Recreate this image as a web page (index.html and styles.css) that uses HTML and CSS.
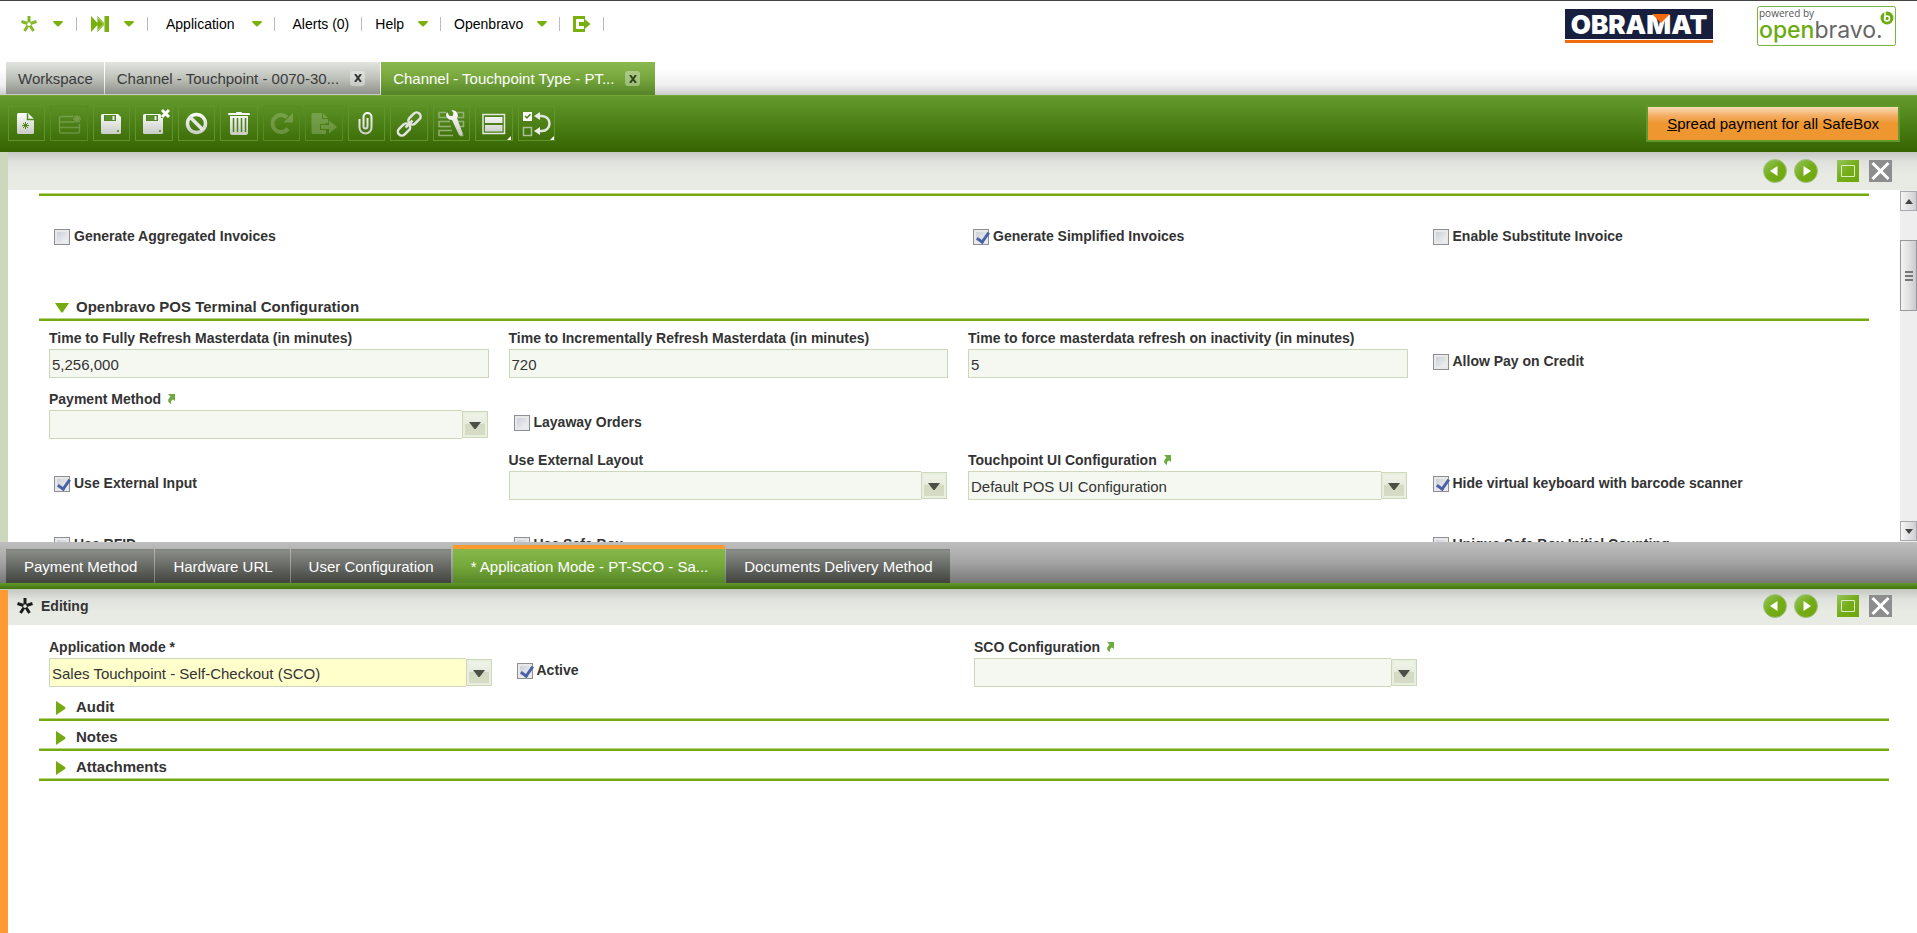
FILE: index.html
```html
<!DOCTYPE html>
<html lang="en">
<head>
    <meta charset="UTF-8">
    <meta name="viewport" content="width=device-width, initial-scale=1.0">
    <title>Openbravo</title>
    <link rel="stylesheet" href="styles.css">
</head>
<body>
    <!-- Shared icons -->
    <svg class="defs" width="0" height="0" aria-hidden="true">
        <defs>
            <linearGradient id="silver" gradientUnits="userSpaceOnUse" x1="0" y1="6" x2="0" y2="30">
                <stop offset="0" stop-color="#fff"/>
                <stop offset="1" stop-color="#c4c8c0"/>
            </linearGradient>
            <linearGradient id="green" x1="0" y1="0" x2="1" y2="1">
                <stop offset="0" stop-color="#95c55c"/>
                <stop offset=".5" stop-color="#74ad18"/>
                <stop offset="1" stop-color="#6ea60c"/>
            </linearGradient>
        </defs>
        <symbol id="star" viewBox="0 0 18 18">
            <path d="M9 7.500V1M10.500 8.500l6-2M10 10.500l3.500 5.500M8 10.500L4.500 16M7.500 8.500l-6-2" fill="none" stroke="currentColor" stroke-width="3"/>
        </symbol>
        <symbol id="caret" viewBox="0 0 10 6"><path d="M0 1q0-1 1-1h8q1 0 1 1L6 5q-1 1-2 0z" fill="#78b00e"/></symbol>
        <symbol id="down" viewBox="0 0 12 8"><path d="M0 0h12L7 6.500q-1 1-2 0z" fill="#4c4f45"/></symbol>
        <symbol id="jump" viewBox="0 0 8 10"><path d="M1 0h7v7L6 5.500Q3.500 6 4 10 0 8 1.500 5L3.500 2.500z" fill="#6cab3c"/></symbol>
        <symbol id="prev" viewBox="0 0 24 24">
            <circle cx="12" cy="12" r="11.500" fill="url(#green)" stroke="#a5c187"/>
            <path d="M14.500 7v10L7 12z" fill="#fff"/>
        </symbol>
        <symbol id="next" viewBox="0 0 24 24">
            <circle cx="12" cy="12" r="11.500" fill="url(#green)" stroke="#a5c187"/>
            <path d="M9.500 7v10l7.500-5z" fill="#fff"/>
        </symbol>
        <symbol id="maximize" viewBox="0 0 22 22">
            <path d="M0 0h22v22H0z" fill="url(#green)"/>
            <path d="M4.500 5.500h13v11h-13z" fill="none" stroke="#dcebc4"/>
        </symbol>
        <symbol id="close" viewBox="0 0 23 22">
            <path d="M0 0h23v22H0z" fill="#8d8d8d"/>
            <path d="M3.500 3l16 16M19.500 3l-16 16" stroke="#fff" stroke-width="3" fill="none"/>
        </symbol>
        <symbol id="floppy" viewBox="0 0 38 36">
            <path d="M9.500 8H25l3 3v15.500q0 1.500-1.500 1.500h-17Q8 28 8 26.500v-17Q8 8 9.500 8z" fill="url(#silver)"/>
            <path d="M11 9h12v6H11z" fill="#4f861f"/>
            <path d="M12.500 9H18v4.500h-5.500zM19.500 10h2v4h-2z" fill="#f4f6f2"/>
            <path d="M12 9h6.500v5H12z" fill="#5c8f2e"/>
            <path d="M24 24h2v2h-2z" fill="#6f9a48"/>
        </symbol>
    </svg>

    <header class="top">
        <nav class="nav">
            <button class="menu" aria-label="Quick create"><svg class="star" width="18" height="18"><use href="#star"/></svg><svg width="10" height="6"><use href="#caret"/></svg></button>
            <span class="sep"></span>
            <button class="menu" aria-label="Quick launch"><svg width="18" height="16"><path d="M0 0l7.500 8L0 16zM6.500 0L14 8l-7.500 8zM13.500 0H18v16h-4.500z" fill="#78b00e"/><path d="M7 2l5.500 6L7 14M13.500 2v12" fill="none" stroke="#b4d47a"/></svg><svg width="10" height="6"><use href="#caret"/></svg></button>
            <span class="sep"></span>
            <button class="menu menu-wide">Application <svg width="10" height="6"><use href="#caret"/></svg></button>
            <span class="sep"></span>
            <button class="menu menu-wide">Alerts (0)</button>
            <span class="sep"></span>
            <button class="menu menu-text">Help <svg width="10" height="6"><use href="#caret"/></svg></button>
            <span class="sep"></span>
            <button class="menu menu-text">Openbravo <svg width="10" height="6"><use href="#caret"/></svg></button>
            <span class="sep"></span>
            <button class="menu menu-text" aria-label="Log out"><svg width="18" height="16"><path d="M12 0v3H3v10h9v3H0V0z" fill="#78b00e"/><path d="M6 6h5V2.500L17.500 8 11 13.500V10H6z" fill="#78b00e"/></svg></button>
            <span class="sep"></span>
        </nav>
        <div class="logos">
            <svg width="148" height="34" role="img" aria-label="Obramat">
                <path d="M0 0h148v30H0z" fill="#171f3d"/>
                <path d="M0 31h148v3H0z" fill="#f26a0b"/>
                <text class="logo-obramat" x="74" y="25" text-anchor="middle">OBRAMAT</text>
                <path d="M87 5h18l-9 9z" fill="#f26a0b"/>
            </svg>
            <svg width="139" height="40" role="img" aria-label="powered by openbravo">
                <rect x=".5" y=".5" width="138" height="39" rx="2" fill="#fff" stroke="#78b43c"/>
                <text class="logo-powered" x="2" y="11">powered by</text>
                <text class="logo-openbravo" x="2" y="32"><tspan class="logo-open">open</tspan><tspan class="logo-light">bravo.</tspan></text>
                <circle cx="130" cy="12" r="6.500" fill="#6aab10"/>
                <path d="M128 5v8" stroke="#fff" stroke-width="1.500"/>
                <circle cx="130" cy="12.500" r="2.500" fill="none" stroke="#fff" stroke-width="1.500"/>
            </svg>
        </div>
    </header>

    <div class="tabs">
        <button class="tab">Workspace</button>
        <button class="tab">Channel - Touchpoint - 0070-30... <span class="tab-close"><svg width="8" height="8"><path d="M1 0l6 8M7 0L1 8" stroke="#333" stroke-width="2"/></svg></span></button>
        <button class="tab tab-active">Channel - Touchpoint Type - PT... <span class="tab-close"><svg width="8" height="8"><path d="M1 0l6 8M7 0L1 8" stroke="#2e4519" stroke-width="2"/></svg></span></button>
    </div>

    <div class="toolbar">
        <div class="tools">
            <button class="tool" aria-label="New"><svg viewBox="0 0 38 36"><path d="M10.500 7H20l6 6v13.500q0 1.500-1.500 1.500h-14Q9 28 9 26.500v-18Q9 7 10.500 7z" fill="url(#silver)"/><path d="M19.500 7.500v6H26" fill="none" stroke="#4f861f" stroke-width="1.500"/><path d="M17.500 16v7M14 19.500h7M15 17l5 5M20 17l-5 5" stroke="#4f861f"/></svg></button>
            <button class="tool tool-off" aria-label="New in grid" disabled><svg viewBox="0 0 38 36"><g fill="none" stroke="#fff" stroke-width="1.500"><path d="M23 10.500H11Q9.500 10.500 9.500 12v13.500q0 1.500 1.500 1.500h17q1.500 0 1.500-1.500V18M9.500 16H24M9.500 21.500h20"/><path d="M27 9v8M23 13h8M24 10l6 6M30 10l-6 6"/></g></svg></button>
            <button class="tool" aria-label="Save"><svg viewBox="0 0 38 36"><use href="#floppy" width="38" height="36"/></svg></button>
            <button class="tool" aria-label="Save and close"><svg viewBox="0 0 38 36"><use href="#floppy" width="38" height="36"/><path d="M26 3h9v9h-9z" fill="#548c22"/><path d="M27 4l7 7M34 4l-7 7" stroke="#fff" stroke-width="3"/></svg></button>
            <button class="tool" aria-label="Cancel"><svg viewBox="0 0 38 36"><circle cx="18.500" cy="17.500" r="9" fill="none" stroke="url(#silver)" stroke-width="3.500"/><path d="M12 11l13 13" stroke="#e6e8e3" stroke-width="3.500"/></svg></button>
            <button class="tool" aria-label="Delete"><svg viewBox="0 0 38 36"><path d="M16 7q0-1 1-1h4q1 0 1 1h7q1 0 1 2H8q0-2 1-2zM10 10h18v17q0 2-2 2H12q-2 0-2-2z" fill="url(#silver)"/><path d="M13.500 12v14M17.500 12v14M21.500 12v14M25.500 12v14" stroke="#4b8019" stroke-width="1.500"/></svg></button>
            <button class="tool tool-off" aria-label="Refresh" disabled><svg viewBox="0 0 38 36"><path d="M25 22.500A8.500 8.500 0 1 1 24 11.500" fill="none" stroke="#fff" stroke-width="4"/><path d="M30 7v9.500h-9.500z" fill="#fff"/></svg></button>
            <button class="tool tool-off" aria-label="Export" disabled><svg viewBox="0 0 38 36"><path d="M8 7h9v6h6v4h-2l-1 1h-5v6h6v3q0 1-1 1H8q-1.500 0-1.500-1.500v-18Q6.500 7 8 7z" fill="#fff"/><path d="M18 7l5 5h-5zM16 19h8v-4.500l8 6.500-8 6.500V23h-8z" fill="#fff"/></svg></button>
            <button class="tool" aria-label="Attachments"><svg viewBox="0 0 38 36"><path d="M11.500 13v8.500a6 6 0 0 0 12 0V11a4 4 0 0 0-8 0v9.500a2 2 0 0 0 4 0V12" fill="none" stroke="url(#silver)" stroke-width="2"/></svg></button>
            <button class="tool" aria-label="Link"><svg viewBox="0 0 38 36"><g fill="none" stroke="#e3e6e0" stroke-width="2.500"><rect x="-7" y="-4" width="14" height="8" rx="4" transform="translate(24.500 12.500) rotate(-45)"/><rect x="-7" y="-4" width="14" height="8" rx="4" transform="translate(14 23.500) rotate(-45)"/><path d="M15.500 21.500l7-7"/></g></svg></button>
            <button class="tool" aria-label="Process"><svg viewBox="0 0 38 36"><g fill="none" stroke="#93b173" stroke-width="1.500"><path d="M13 6.500H6v5h8M24 6.500h6.500v5H24M17 15.500H6v5h12M23 15.500h7.500v5H25M19 24.500H6v5h14M27 29.500h3.500"/></g><path d="M14 6l2.500 4 3 0 1-3-2-3q6 0 6.500 6l-1 2 6 16q-2 3-4 1l-7-15q-5 0-6-5z" fill="url(#silver)"/></svg></button>
            <button class="tool" aria-label="Grid and form view"><svg viewBox="0 0 38 36"><path d="M8 8.500h21.500v19H8z" fill="#4b8019" stroke="#e3e6e0" stroke-width="1.500"/><path d="M10 11h17.500v6H10zM10 19h17.500v6.500H10z" fill="url(#silver)"/><path d="M36 30v4h-4z" fill="#fff"/></svg></button>
            <button class="tool" aria-label="Set view"><svg viewBox="0 0 38 36"><path d="M5 6h9v9H5z" fill="#fff"/><path d="M7 10l2 2 3.500-4" fill="none" stroke="#4b8019" stroke-width="1.500"/><path d="M5.500 21.500h8v8h-8z" fill="none" stroke="#a9c094" stroke-width="1.500"/><path d="M20 10h4a7.500 7.500 0 0 1 0 15h-4" fill="none" stroke="#e3e6e0" stroke-width="2.500"/><path d="M22 6v8l-6-4zM22 21v8l-6-4z" fill="#eceeea"/><path d="M36 30v4h-4z" fill="#fff"/></svg></button>
        </div>
        <button class="action"><u>S</u>pread payment for all SafeBox</button>
    </div>

    <main class="view">
        <section class="pane pane-header">
            <div class="status">
                <button class="icon" aria-label="Previous"><svg width="24" height="24"><use href="#prev"/></svg></button>
                <button class="icon" aria-label="Next"><svg width="24" height="24"><use href="#next"/></svg></button>
                <button class="icon icon-max" aria-label="Maximize"><svg width="22" height="22"><use href="#maximize"/></svg></button>
                <button class="icon icon-close" aria-label="Close"><svg width="23" height="22"><use href="#close"/></svg></button>
            </div>
            <div class="scroller">
                <div class="form">
                    <div class="rule"></div>
                    <div class="fields">
                        <label class="check"><input type="checkbox">Generate Aggregated Invoices</label>
                        <label class="check col-3"><input type="checkbox" checked>Generate Simplified Invoices</label>
                        <label class="check"><input type="checkbox">Enable Substitute Invoice</label>
                    </div>
                    <h2 class="section section-open"><button><svg width="14" height="10"><path d="M0 0h14L8 9q-1 1-2 0z" fill="#72aa10"/></svg>Openbravo POS Terminal Configuration</button></h2>
                    <div class="fields">
                        <div class="field">
                            <label for="full-refresh">Time to Fully Refresh Masterdata (in minutes)</label>
                            <input id="full-refresh" type="text" value="5,256,000">
                        </div>
                        <div class="field">
                            <label for="inc-refresh">Time to Incrementally Refresh Masterdata (in minutes)</label>
                            <input id="inc-refresh" type="text" value="720">
                        </div>
                        <div class="field">
                            <label for="force-refresh">Time to force masterdata refresh on inactivity (in minutes)</label>
                            <input id="force-refresh" type="text" value="5">
                        </div>
                        <label class="check"><input type="checkbox">Allow Pay on Credit</label>

                        <div class="field">
                            <label for="payment-method">Payment Method <svg width="8" height="10"><use href="#jump"/></svg></label>
                            <div class="combo">
                                <select id="payment-method"><option></option></select>
                                <span class="picker"><svg width="12" height="8"><use href="#down"/></svg></span>
                            </div>
                        </div>
                        <label class="check"><input type="checkbox">Layaway Orders</label>

                        <label class="check col-1"><input type="checkbox" checked>Use External Input</label>
                        <div class="field">
                            <label for="external-layout">Use External Layout</label>
                            <div class="combo">
                                <select id="external-layout"><option></option></select>
                                <span class="picker"><svg width="12" height="8"><use href="#down"/></svg></span>
                            </div>
                        </div>
                        <div class="field">
                            <label for="ui-config">Touchpoint UI Configuration <svg width="8" height="10"><use href="#jump"/></svg></label>
                            <div class="combo">
                                <select id="ui-config"><option>Default POS UI Configuration</option></select>
                                <span class="picker"><svg width="12" height="8"><use href="#down"/></svg></span>
                            </div>
                        </div>
                        <label class="check"><input type="checkbox" checked>Hide virtual keyboard with barcode scanner</label>

                        <label class="check"><input type="checkbox">Use RFID</label>
                        <label class="check"><input type="checkbox">Use Safe Box</label>
                        <label class="check col-4"><input type="checkbox">Unique Safe Box Initial Counting</label>
                    </div>
                </div>
                <div class="scrollbar">
                    <button class="scroll-btn" aria-label="Scroll up"><svg width="8" height="5"><path d="M4 0l4 5H0z" fill="#444"/></svg></button>
                    <div class="thumb"><i></i><i></i><i></i></div>
                    <button class="scroll-btn scroll-down" aria-label="Scroll down"><svg width="8" height="5"><path d="M0 0h8L4 5z" fill="#444"/></svg></button>
                </div>
            </div>
        </section>

        <div class="child-tabs">
            <button class="child-tab">Payment Method</button>
            <button class="child-tab">Hardware URL</button>
            <button class="child-tab">User Configuration</button>
            <button class="child-tab child-active">* Application Mode - PT-SCO - Sa...</button>
            <button class="child-tab">Documents Delivery Method</button>
        </div>
        <div class="strip"></div>

        <section class="pane pane-child">
            <div class="status">
                <svg class="editing-star" width="18" height="18"><use href="#star"/></svg>
                <span class="editing">Editing</span>
                <button class="icon" aria-label="Previous"><svg width="24" height="24"><use href="#prev"/></svg></button>
                <button class="icon" aria-label="Next"><svg width="24" height="24"><use href="#next"/></svg></button>
                <button class="icon icon-max" aria-label="Maximize"><svg width="22" height="22"><use href="#maximize"/></svg></button>
                <button class="icon icon-close" aria-label="Close"><svg width="23" height="22"><use href="#close"/></svg></button>
            </div>
            <div class="form form-child">
                <div class="fields">
                    <div class="field">
                        <label for="app-mode">Application Mode *</label>
                        <div class="combo required">
                            <select id="app-mode"><option>Sales Touchpoint - Self-Checkout (SCO)</option></select>
                            <span class="picker"><svg width="12" height="8"><use href="#down"/></svg></span>
                        </div>
                    </div>
                    <label class="check"><input type="checkbox" checked>Active</label>
                    <div class="field">
                        <label for="sco-config">SCO Configuration <svg width="8" height="10"><use href="#jump"/></svg></label>
                        <div class="combo">
                            <select id="sco-config"><option></option></select>
                            <span class="picker"><svg width="12" height="8"><use href="#down"/></svg></span>
                        </div>
                    </div>
                </div>
                <h2 class="section"><button><svg width="14" height="14"><path d="M1 0l9 6q1 1 0 2l-9 6z" fill="#72aa10"/></svg>Audit</button></h2>
                <h2 class="section"><button><svg width="14" height="14"><path d="M1 0l9 6q1 1 0 2l-9 6z" fill="#72aa10"/></svg>Notes</button></h2>
                <h2 class="section"><button><svg width="14" height="14"><path d="M1 0l9 6q1 1 0 2l-9 6z" fill="#72aa10"/></svg>Attachments</button></h2>
            </div>
        </section>
    </main>
</body>
</html>
```

FILE: styles.css
```css
* {
    box-sizing: border-box;
}

body {
    margin: 0;
    height: 100vh;
    display: flex;
    flex-direction: column;
    overflow: hidden;
    border-top: 1px solid #444;
    background-color: #fff;
    color: #333;
    font-family: "Liberation Sans", Arial, sans-serif;
    font-size: 15px;
}

button {
    margin: 0;
    padding: 0;
    border: 0;
    background: none;
    color: inherit;
    font: inherit;
    cursor: pointer;
}

svg {
    display: block;
    flex: none;
}

.defs {
    position: absolute;
}

/* Top bar */
.top {
    display: flex;
    justify-content: space-between;
    height: 61px;
    flex: none;
}

.nav {
    display: flex;
    align-items: center;
    height: 46px;
    padding-left: 6px;
    color: #000;
    font-size: 14px;
}

.menu {
    display: flex;
    align-items: center;
    gap: 15px;
    padding: 0 13px 0 14px;
    white-space: nowrap;
}

.menu-text {
    gap: 14px;
    padding: 0 12px 0 13px;
}

.menu-wide {
    gap: 17px;
    padding: 0 12px 0 18px;
}

.star {
    color: #83b928;
}

.sep {
    width: 1px;
    height: 14px;
    background-color: #bbb;
}

.logos {
    display: flex;
    align-items: center;
    gap: 44px;
    height: 50px;
    padding-right: 21px;
}

.logo-obramat {
    fill: #fff;
    font-family: Inter, sans-serif;
    font-size: 26px;
    font-weight: 900;
}

.logo-powered {
    fill: #555;
    font-family: "Open Sans", sans-serif;
    font-size: 10px;
}

.logo-openbravo {
    font-family: Inter, sans-serif;
    font-size: 23px;
    font-weight: 400;
}

.logo-open {
    fill: #6aab10;
    font-weight: 500;
}

.logo-light {
    fill: #666;
}

/* Main tabs */
.tabs {
    display: flex;
    flex: none;
    gap: 1px;
    height: 33px;
    padding-left: 6px;
    background-image: linear-gradient(#fff 20%, #f0f0f0 70%, #ccc);
}

.tab {
    display: flex;
    align-items: center;
    gap: 11px;
    padding: 0 11px 0 12px;
    border-bottom: 1px solid #c8c8cc;
    background-image: linear-gradient(#e2e4df, #bfc2bb 50%, #8f928b);
    color: #3a3a3a;
    white-space: nowrap;
}

.tab-active {
    border-bottom: 0;
    background-image: linear-gradient(#8bb950, #76a63b 50%, #55842a);
    color: #fff;
}

.tab-close {
    display: flex;
    align-items: center;
    justify-content: center;
    width: 15px;
    height: 15px;
    margin-right: 4px;
    border-radius: 3px;
    background-color: rgba(255, 255, 255, 0.35);
}

/* Toolbar */
.toolbar {
    display: flex;
    align-items: center;
    justify-content: space-between;
    flex: none;
    height: 57px;
    padding: 0 17px 2px 8px;
    border-top: 1px solid #74a832;
    background-image: linear-gradient(#649a2e, #4c8016 50%, #356300);
}

.tools {
    display: flex;
    gap: 5px;
    width: 547px;
}

.tool {
    flex: 1;
    min-width: 0;
    height: 35px;
    border: 1px solid #5f952b;
}

.tool svg {
    width: 38px;
    height: 36px;
    margin: -1px;
}

.tool-off {
    border-color: #558b22;
}

.tool-off svg {
    opacity: 0.2;
}

.action {
    height: 37px;
    padding: 0 19px;
    border: 2px solid #609a2c;
    background-image: linear-gradient(#fbdcb8, #f4b068 25%, #ee9630 50%, #ee9630);
    color: #000;
}

/* Panes */
.view {
    display: flex;
    flex: 1;
    flex-direction: column;
    min-height: 0;
}

.pane {
    display: flex;
    flex-direction: column;
    min-height: 0;
    border-left: 8px solid #cdd7bb;
}

.pane-header {
    flex: 390;
}

.pane-child {
    flex: 343;
    border-left-color: #ff9933;
}

.status {
    display: flex;
    align-items: center;
    justify-content: flex-end;
    gap: 7px;
    flex: none;
    height: 38px;
    padding: 0 25px 0 8px;
    background-image: linear-gradient(#c6c8c3, #dfe2dc 25%, #e8ebe4 60%);
}

.pane-child .status {
    height: 35px;
    padding-bottom: 3px;
}

.icon-max {
    margin-left: 12px;
}

.icon-close {
    margin-left: 3px;
}

.editing-star {
    color: #1c1c1c;
}

.editing {
    flex: 1;
    font-size: 14px;
    font-weight: bold;
}

.scroller {
    display: flex;
    flex: 1;
    min-height: 0;
    overflow: hidden;
}

/* Forms */
.form {
    flex: 1;
    padding: 3px 31px 0;
}

.form-child {
    padding: 11px 28px 0 31px;
}

.rule {
    height: 3px;
    margin-bottom: 6px;
    border-top: 1px solid #b9d487;
    background-color: #72aa10;
}

.fields {
    display: grid;
    grid-template-columns: repeat(4, 1fr);
    grid-auto-rows: 51px;
    gap: 10px 20px;
    padding: 0 2px 0 10px;
}

.form-child .fields {
    padding-right: 10px;
    margin-bottom: 4px;
}

.field label {
    display: flex;
    align-items: center;
    gap: 6px;
    height: 22px;
    font-size: 14px;
    font-weight: bold;
}

.field input,
.field select {
    display: block;
    width: 100%;
    height: 29px;
    padding: 2px 2px 0;
    border: 1px solid #cdd7bb;
    border-radius: 0;
    outline: 0;
    background-color: #f5f8f1;
    color: #333;
    font: inherit;
    appearance: none;
}

.combo {
    display: flex;
    align-items: center;
    padding-right: 1px;
}

.form-child .combo {
    padding-right: 0;
}

.combo select {
    flex: 1;
    min-width: 0;
    border-right: 0;
}

.required select {
    background-color: #ffffcc;
}

.picker {
    display: flex;
    align-items: center;
    justify-content: center;
    width: 26px;
    height: 27px;
    padding-top: 3px;
    border: 1px solid #cdd7bb;
    background-image: linear-gradient(#f2f5ec, #e8ecdd 45%, #d3d9c2 50%, #d6dcc6);
    box-shadow: inset 0 0 0 2px #e9efdf;
}

.check {
    display: flex;
    align-items: center;
    align-self: start;
    gap: 4px;
    height: 18px;
    margin-top: 26px;
    padding: 0 0 2px 5px;
    font-size: 14px;
    font-weight: bold;
    line-height: 16px;
}

.check input {
    position: relative;
    flex: none;
    width: 16px;
    height: 16px;
    margin: 2px 0 0;
    border: 1px solid #8c8f94;
    background-image: linear-gradient(135deg, #c5c9d2, #f8f8f8);
    box-shadow: inset 0 0 0 2px #e9e9e9;
    appearance: none;
}

.check input:checked::after {
    content: "";
    position: absolute;
    left: 5px;
    top: 0;
    width: 5px;
    height: 10px;
    border: solid #4a62a8;
    border-width: 0 3px 3px 0;
    transform: rotate(35deg);
}

.col-1 {
    grid-column: 1;
}

.col-3 {
    grid-column: 3;
}

.col-4 {
    grid-column: 4;
}

.section {
    height: 30px;
    margin: 0;
    border-bottom: 2px solid #72aa10;
    box-shadow: inset 0 -1px #b9d487;
    font-size: 15px;
}

.section button {
    display: flex;
    align-items: center;
    gap: 7px;
    height: 27px;
    padding: 4px 0 0 16px;
}

.section button svg {
    margin-top: 2px;
}

.section-open {
    margin: 38px 0 6px;
}

/* Scrollbar */
.scrollbar {
    display: flex;
    flex-direction: column;
    width: 17px;
    padding: 1px 0;
    background-color: #eee;
}

.scroll-btn {
    display: flex;
    align-items: center;
    justify-content: center;
    height: 20px;
    border: 1px solid #a9a9ad;
    background-image: linear-gradient(90deg, #f6f6f6, #cfcfd2);
}

.scroll-down {
    margin-top: auto;
}

.thumb {
    display: flex;
    flex-direction: column;
    align-items: center;
    justify-content: center;
    gap: 2px;
    height: 71px;
    margin-top: 29px;
    border: 1px solid #98989c;
    background-image: linear-gradient(90deg, #f4f4f4, #e2e2e2 50%, #cbcbce);
}

.thumb i {
    width: 8px;
    height: 2px;
    background-color: #777;
}

/* Child tabs */
.child-tabs {
    display: flex;
    align-items: flex-end;
    flex: none;
    gap: 1px;
    height: 41px;
    padding-left: 6px;
    background-image: linear-gradient(#bebebe, #a4a4a4 50%, #777);
}

.child-tab {
    height: 34px;
    padding: 0 17px 0 18px;
    border-top: 1px solid #7d7f7a;
    background-image: linear-gradient(#8b8e88, #666864 50%, #41433e);
    color: #fff;
    white-space: nowrap;
}

.child-active {
    height: 38px;
    margin-left: 1px;
    border-top: 4px solid #ff9a33;
    background-image: linear-gradient(#86b74b, #75a83a 50%, #568628);
}

.strip {
    flex: none;
    height: 7px;
    border-bottom: 1px solid #c3cbb4;
    background-image: linear-gradient(#63992a, #3f720c);
}
```
